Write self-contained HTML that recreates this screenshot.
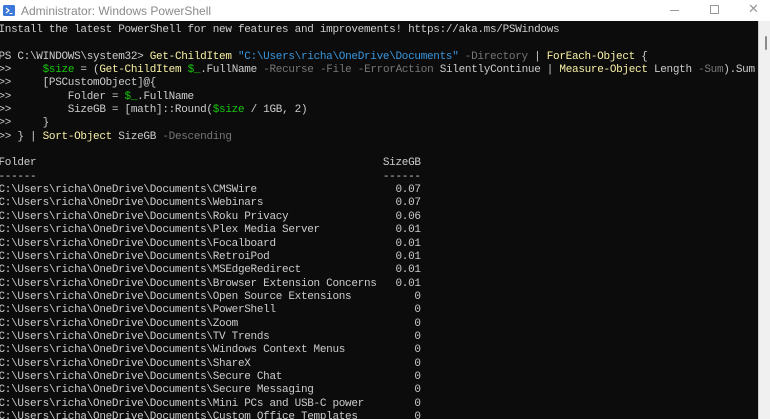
<!DOCTYPE html>
<html><head><style>
html,body{margin:0;padding:0;width:770px;height:419px;overflow:hidden;background:#fff;}
.tb{position:absolute;left:0;top:0;width:770px;height:21px;background:#fff;}
.tt{position:absolute;left:21px;top:4px;font:12px "Liberation Sans",sans-serif;color:#8a8a8a;}
.term{position:absolute;left:0;top:21px;width:758px;height:398px;background:#0c0c0c;overflow:hidden;}
.sb{position:absolute;left:758px;top:21px;width:12px;height:398px;background:#f0f0f0;border-left:1px solid #d0d0d0;}
.th{position:absolute;left:765px;top:36px;width:2px;height:14px;background:#8a8a8a;border-radius:1px;}
pre{position:absolute;left:-1.5px;top:3px;margin:0;font:11px/13.35px "Liberation Mono",monospace;letter-spacing:-0.3px;color:#cccccc;white-space:pre;}
.y{color:#f9f1a5}.b{color:#3a96dd}.g{color:#767676}.v{color:#16c60c}
</style></head><body>
<div class="tb">
<svg style="position:absolute;left:3px;top:5px" width="12" height="11" viewBox="0 0 12 11"><rect width="12" height="11" rx="1.5" fill="#3b78d8"/><path d="M3 3l3 2.5-3 2.5" stroke="#fff" stroke-width="1.2" fill="none"/><path d="M6.5 8.5h3" stroke="#fff" stroke-width="1.1"/></svg>
<div class="tt">Administrator: Windows PowerShell</div>
<div style="position:absolute;left:670px;top:10px;width:9px;height:1px;background:#999"></div>
<div style="position:absolute;left:710px;top:5px;width:7px;height:7px;border:1px solid #999"></div>
<div style="position:absolute;left:748px;top:1px;font:13px 'Liberation Sans',sans-serif;color:#999">✕</div>
</div>
<div class="term"><pre>Install the latest PowerShell for new features and improvements! https://aka.ms/PSWindows

PS C:\WINDOWS\system32&gt; <span class="y">Get-ChildItem</span> <span class="b">"C:\Users\richa\OneDrive\Documents"</span> <span class="g">-Directory</span> | <span class="y">ForEach-Object</span> {
&gt;&gt;     <span class="v">$size</span> = (<span class="y">Get-ChildItem</span> <span class="v">$_</span>.FullName <span class="g">-Recurse</span> <span class="g">-File</span> <span class="g">-ErrorAction</span> SilentlyContinue | <span class="y">Measure-Object</span> Length <span class="g">-Sum</span>).Sum
&gt;&gt;     [PSCustomObject]@{
&gt;&gt;         Folder = <span class="v">$_</span>.FullName
&gt;&gt;         SizeGB = [math]::Round(<span class="v">$size</span> / 1GB, 2)
&gt;&gt;     }
&gt;&gt; } | <span class="y">Sort-Object</span> SizeGB <span class="g">-Descending</span>

Folder                                                       SizeGB
------                                                       ------
C:\Users\richa\OneDrive\Documents\CMSWire                      0.07
C:\Users\richa\OneDrive\Documents\Webinars                     0.07
C:\Users\richa\OneDrive\Documents\Roku Privacy                 0.06
C:\Users\richa\OneDrive\Documents\Plex Media Server            0.01
C:\Users\richa\OneDrive\Documents\Focalboard                   0.01
C:\Users\richa\OneDrive\Documents\RetroiPod                    0.01
C:\Users\richa\OneDrive\Documents\MSEdgeRedirect               0.01
C:\Users\richa\OneDrive\Documents\Browser Extension Concerns   0.01
C:\Users\richa\OneDrive\Documents\Open Source Extensions          0
C:\Users\richa\OneDrive\Documents\PowerShell                      0
C:\Users\richa\OneDrive\Documents\Zoom                            0
C:\Users\richa\OneDrive\Documents\TV Trends                       0
C:\Users\richa\OneDrive\Documents\Windows Context Menus           0
C:\Users\richa\OneDrive\Documents\ShareX                          0
C:\Users\richa\OneDrive\Documents\Secure Chat                     0
C:\Users\richa\OneDrive\Documents\Secure Messaging                0
C:\Users\richa\OneDrive\Documents\Mini PCs and USB-C power        0
C:\Users\richa\OneDrive\Documents\Custom Office Templates         0</pre></div>
<div class="sb"></div><div class="th"></div>
</body></html>
